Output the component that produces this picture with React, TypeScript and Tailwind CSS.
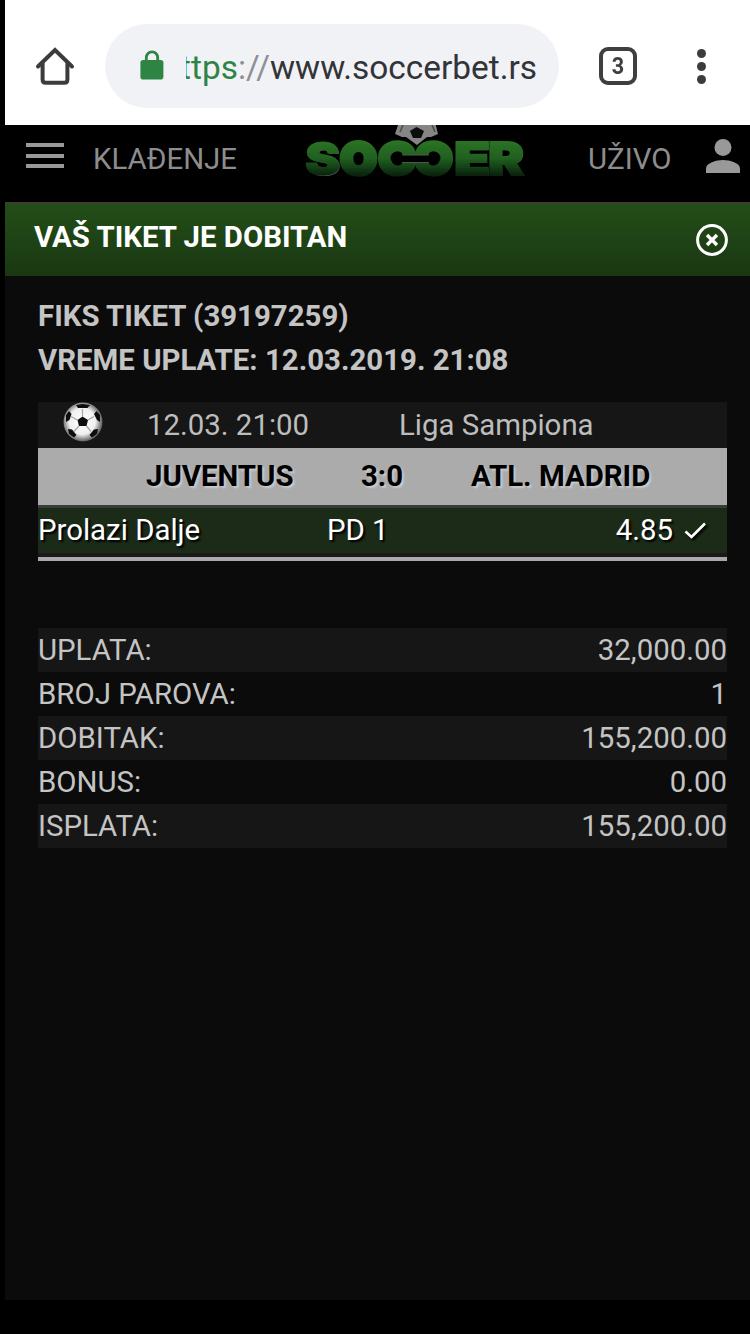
import React from 'react';

const summary = [
  { label: 'UPLATA:', value: '32,000.00' },
  { label: 'BROJ PAROVA:', value: '1' },
  { label: 'DOBITAK:', value: '155,200.00' },
  { label: 'BONUS:', value: '0.00' },
  { label: 'ISPLATA:', value: '155,200.00' },
];

function HomeIcon() {
  return (
    <svg width="40" height="40" viewBox="0 0 40 40" fill="none" stroke="#3c3c3c" strokeWidth="4" strokeLinecap="round" strokeLinejoin="round">
      <path d="M3 20.5 L20 4 L37 20.5" strokeLinejoin="miter" />
      <path d="M7.6 17.5 V33.5 Q7.6 36.8 10.6 36.8 H29.4 Q32.4 36.8 32.4 33.5 V17.5" />
    </svg>
  );
}

function LockIcon() {
  return (
    <svg width="24" height="30" viewBox="0 0 24 30">
      <path d="M6.3 11 V7.5 a5.7 5.7 0 0 1 11.4 0 V11" fill="none" stroke="#2e8443" strokeWidth="2.8" />
      <rect x="0.4" y="10" width="23" height="19.5" rx="2.8" fill="#2e8443" />
    </svg>
  );
}

function Logo() {
  return (
    <svg width="224" height="72" viewBox="0 0 224 72" className="font-['Inter',sans-serif]">
      <defs>
        <linearGradient id="logoGreen" gradientUnits="userSpaceOnUse" x1="0" y1="14" x2="0" y2="53">
          <stop offset="0" stopColor="#2c7526" />
          <stop offset="0.5" stopColor="#216020" />
          <stop offset="1" stopColor="#03180a" />
        </linearGradient>
        <filter id="soft" x="-5%" y="-5%" width="110%" height="110%">
          <feGaussianBlur stdDeviation="0.6" />
        </filter>
      </defs>
      <g filter="url(#soft)">
        <path d="M95 -3 H131 L134 9 L127 12 H123 L113 20 L102 12 H98 L91 9 Z" fill="#858585" />
        <path d="M106 6 L112.5 2 L120 6 L117 13 H109 Z" fill="#0a0a0a" />
        <path d="M99 0 L96 7 M128 0 L131 7" stroke="#4a4a4a" strokeWidth="1.5" fill="none" />
        {/* Grey edge behind the green letters */}
        <g fill="#4d4d4d" fontSize="46" fontWeight="900" transform="translate(1.2 1)">
          <text x="1" y="50" textLength="35" lengthAdjust="spacingAndGlyphs">S</text>
          <text x="150" y="50" textLength="36" lengthAdjust="spacingAndGlyphs">E</text>
          <text x="184" y="50" textLength="36" lengthAdjust="spacingAndGlyphs">R</text>
        </g>
        <g fill="url(#logoGreen)" stroke="url(#logoGreen)" strokeWidth="2" fontSize="46" fontWeight="900">
          <text x="1" y="50" strokeWidth="1.2" textLength="35" lengthAdjust="spacingAndGlyphs">S</text>
          <text x="36" y="50" strokeWidth="4" textLength="37" lengthAdjust="spacingAndGlyphs">O</text>
          <text x="74" y="50" strokeWidth="3.4" textLength="38" lengthAdjust="spacingAndGlyphs">C</text>
          <text x="-149" y="50" strokeWidth="3.4" textLength="38" lengthAdjust="spacingAndGlyphs" transform="scale(-1 1)">C</text>
          <text x="150" y="50" textLength="36" lengthAdjust="spacingAndGlyphs">E</text>
          <text x="184" y="50" textLength="36" lengthAdjust="spacingAndGlyphs">R</text>
        </g>
        {/* Slot that joins the two facing letters */}
        <circle cx="93" cy="33" r="6.5" fill="#050505" />
        <circle cx="130" cy="33" r="6.5" fill="#050505" />
        <rect x="96" y="30" width="31" height="7" fill="#050505" />
        <path d="M98 30 H125 M98 37.5 H125" stroke="#4f574c" strokeWidth="1" />
      </g>
    </svg>
  );
}

function BallIcon() {
  return (
    <svg width="42" height="40" viewBox="0 0 42 40">
      <defs>
        <radialGradient id="ball" cx="0.48" cy="0.48" r="0.52">
          <stop offset="0" stopColor="#ffffff" />
          <stop offset="0.65" stopColor="#f0f0f0" />
          <stop offset="1" stopColor="#5c5c5c" />
        </radialGradient>
        <clipPath id="ballClip">
          <circle cx="21" cy="20" r="18.5" />
        </clipPath>
        <filter id="ballSoft">
          <feGaussianBlur stdDeviation="0.6" />
        </filter>
      </defs>
      <g filter="url(#ballSoft)">
        <circle cx="21" cy="20" r="19.5" fill="url(#ball)" />
        <g clipPath="url(#ballClip)" fill="#0c0c0c">
          <path d="M15.5 18 L20.5 14.5 L26 18 L24.5 24 H17 Z" />
          <path d="M14 3 L20.5 2 L28 3 L25.5 6 H16 Z" />
          <path d="M4 13 L7 9 L9.5 12 L7.5 18 L4 20 Z" />
          <path d="M38 13 L34.5 9 L32 12 L35 18 L38 20 Z" />
          <path d="M6 27 L10 27.5 L14.5 33 L12 35.5 L7 32 Z" />
          <path d="M36 27 L32 27.5 L27.5 33 L30 35.5 L35 32 Z" />
          <path d="M20.5 15 V7 M26 18 L32 14.5 M24.5 24 L29 29.5 M17 24 L12 29.5 M15.5 18 L9 14.5" stroke="#a5a5a5" strokeWidth="1.2" />
        </g>
      </g>
    </svg>
  );
}

function BrowserBar() {
  return (
    <div className="flex h-[125px] shrink-0 items-center bg-white pt-[7px]">
      <div className="ml-[30px] flex w-10">
        <HomeIcon />
      </div>
      <div className="ml-[30px] flex h-[84px] w-[454px] items-center rounded-full bg-[#f1f2f6]">
        <div className="-mt-[3px] ml-[35px]">
          <LockIcon />
        </div>
        {/* The start of the address is scrolled out of view */}
        <div className="mt-[3px] ml-[22px] flex w-[351px] justify-end overflow-hidden text-[33.4px] leading-[44px] whitespace-nowrap">
          <span className="text-[#2e8443]">https</span>
          <span className="text-[#8e9094]">://</span>
          <span className="text-[#333437]">www.soccerbet.rs</span>
        </div>
      </div>
      <div className="ml-10 flex h-[38px] w-[38px] items-center justify-center rounded-[9px] border-4 border-[#3f3f3f] text-2xl font-bold text-[#3f3f3f]">
        <span className="scale-x-90">3</span>
      </div>
      <div className="ml-[60px] flex flex-col gap-1">
        <span className="h-[9px] w-[9px] rounded-full bg-[#3c3c3c]" />
        <span className="h-[9px] w-[9px] rounded-full bg-[#3c3c3c]" />
        <span className="h-[9px] w-[9px] rounded-full bg-[#3c3c3c]" />
      </div>
    </div>
  );
}

function SiteHeader() {
  return (
    <div className="flex h-[77px] shrink-0 items-start bg-black text-[#8d8d8d]">
      <div className="mt-[18px] ml-[21px] flex w-[38px] flex-col gap-[6.5px]">
        <span className="h-1 bg-[#999]" />
        <span className="h-1 bg-[#999]" />
        <span className="h-1 bg-[#999]" />
      </div>
      <span className="mt-[12px] ml-[29px] w-[145px] leading-[44px]">KLAĐENJE</span>
      <div className="ml-[66px]">
        <Logo />
      </div>
      <span className="mt-[12px] ml-[60px] w-[84px] leading-[44px]">UŽIVO</span>
      <svg width="34" height="34" viewBox="0 0 34 34" className="mt-[14px] ml-[34px]" fill="#999">
        <circle cx="17" cy="8.5" r="8.5" />
        <path d="M0 34 V29.5 C0 24 10 21 17 21 S34 24 34 29.5 V34 Z" />
      </svg>
    </div>
  );
}

export default function App() {
  return (
    <div className="flex h-[1334px] w-[750px] flex-col bg-black pl-[5px] font-['Roboto',sans-serif] text-[29.4px]">
      <BrowserBar />
      <SiteHeader />

      {/* Winning ticket banner */}
      <div className="flex h-[74px] shrink-0 items-center justify-between border-t-2 border-[#393e31] bg-linear-to-b from-[#234e18] to-[#1a3712] pr-[22px] pl-[29px]">
        <span className="-mt-[5px] font-bold text-white">VAŠ TIKET JE DOBITAN</span>
        <svg width="32" height="32" viewBox="0 0 32 32" fill="none" stroke="#fff">
          <circle cx="16" cy="16" r="14.4" strokeWidth="3" />
          <path d="M11 11 L21 21 M21 11 L11 21" strokeWidth="3.4" />
        </svg>
      </div>

      <div className="h-[1024px] shrink-0 bg-[#0b0b0b] pt-[18px] pr-[23px] pl-[33px] text-[#c4c4c4]">
        <div className="leading-[44px] font-bold">
          <p>FIKS TIKET (39197259)</p>
          <p>VREME UPLATE: 12.03.2019. 21:08</p>
        </div>

        {/* Match */}
        <div className="mt-[20px]">
          <div className="flex h-[46px] bg-[#161616] leading-[46px] text-[#bdbdbd]">
            <div className="w-[109px] pl-6">
              <BallIcon />
            </div>
            <span className="w-[252px]">12.03. 21:00</span>
            <span>Liga Sampiona</span>
          </div>
          <div className="flex h-[57px] bg-[#ababab] pl-[108px] leading-[56px] font-bold text-black [text-shadow:2px_2px_2px_#cacaca]">
            <span className="w-[215px]">JUVENTUS</span>
            <span className="w-[110px]">3:0</span>
            <span>ATL. MADRID</span>
          </div>
          <div className="flex h-[52px] border-t-[3px] border-b-4 border-t-[#3b3b3b] border-b-[#1a1a1a] bg-[#1c2b18] leading-[44px] text-white [text-shadow:2px_2px_2px_#000]">
            <span className="w-[289px]">Prolazi Dalje</span>
            <span className="grow">PD 1</span>
            <span>4.85</span>
            <svg width="24" height="20" viewBox="0 0 24 20" fill="none" className="mt-[13px] mr-[19px] ml-[11px] drop-shadow-[2px_2px_1px_#000]">
              <path d="M1.5 10.5 L7.5 16 L21 2.5" stroke="#fff" strokeWidth="2.6" />
            </svg>
          </div>
          <div className="h-1 bg-[#aaa8aa]" />
        </div>

        {/* Payment summary */}
        <div className="mt-[67px]">
          {summary.map((row) => (
            <div key={row.label} className="flex h-[44px] justify-between leading-[44px] odd:bg-[#161616]">
              <span>{row.label}</span>
              <span>{row.value}</span>
            </div>
          ))}
        </div>
      </div>
    </div>
  );
}
